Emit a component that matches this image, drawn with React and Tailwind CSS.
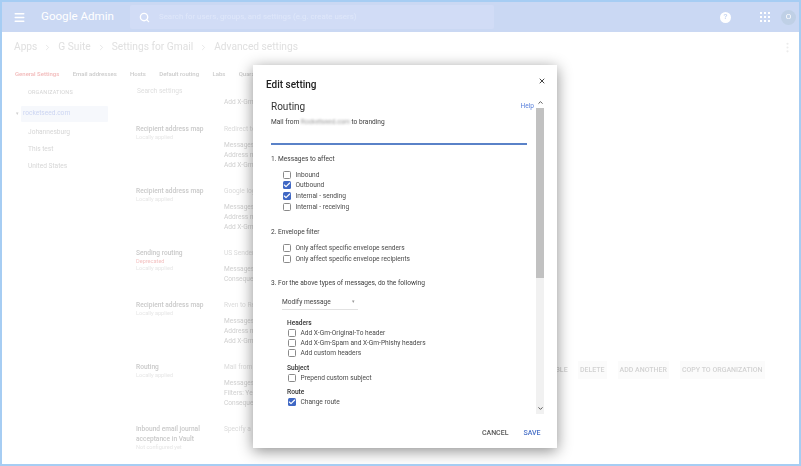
import React from "react";
import { Menu, Search, X, ChevronUp, ChevronDown, Check, EllipsisVertical, ChevronRight } from "lucide-react";

function Box({ on, className = "" }) {
  return (
    <span className={"flex h-[8px] w-[8px] shrink-0 items-center justify-center rounded-[1.5px] " + (on ? "bg-[#3f67c4] " : "border border-[#8a8a8a] bg-white ") + className}>
      {on && <Check size={8} strokeWidth={3.5} className="text-white" />}
    </span>
  );
}

function Opt({ label, on, deep }) {
  return (
    <div className={"flex items-center gap-[4.5px] " + (deep ? "h-[10px] pl-[17px]" : "h-[10.67px] pl-[12px]")}>
      <Box on={on} />
      <span className="text-[6.6px] leading-none text-[#4a4a4a]">{label}</span>
    </div>
  );
}

function Setting({ title, subs, lines, first, sub, actions, h = "h-[62px]" }) {
  return (
    <div className={"flex " + h}>
      <div className="w-[88px] shrink-0 pt-[1px]">
        {title.map((t) => (
          <div key={t} className="text-[6.6px] leading-[10px] font-medium text-[#c9c9c9]">{t}</div>
        ))}
        {sub && <div className="text-[5.6px] leading-[7px] text-[#f4c4c4]">{sub}</div>}
        {subs && <div className="text-[5.6px] leading-[7px] text-[#e6e6e6]">{subs}</div>}
      </div>
      <div className="w-[300px] shrink-0 pt-[1px] text-[6.6px] text-[#cfcfcf]">
        <div className="mb-[6px] leading-[10px] text-[#dadada]">{first}</div>
        {lines && lines.map((l) => <div key={l} className="leading-[10px]">{l}</div>)}
      </div>
      {actions && (
        <div className="ml-[16px] flex h-[18px] items-center gap-[11px] text-[7px] font-medium whitespace-nowrap text-[#d2d2d2]">
          <span className="w-[27px] text-right">DISABLE</span>
          <span className="bg-[#fbfbfb] px-[2px] py-[4px]">DELETE</span>
          <span className="bg-[#fbfbfb] px-[2px] py-[4px]">ADD ANOTHER</span>
          <span className="bg-[#fbfbfb] px-[2px] py-[4px]">COPY TO ORGANIZATION</span>
        </div>
      )}
    </div>
  );
}

export default function App() {
  return (
    <div className="relative box-border h-[466px] w-[801px] overflow-hidden border-2 border-[#a6cdf3] bg-white font-['Roboto',sans-serif]">
      <div className="blur-[0.6px]">
        <header className="flex h-[30px] items-center bg-[#cad8f3] text-white">
          <Menu size={13} strokeWidth={2.5} className="ml-[11px] shrink-0" />
          <div className="ml-[15px] w-[89px] shrink-0 text-[11.6px] leading-none whitespace-nowrap">Google Admin</div>
          <div className="flex h-[24px] w-[364px] shrink-0 items-center rounded-[2px] bg-[#d1dcf6]">
            <Search size={11} strokeWidth={3} className="ml-[9px] shrink-0" />
            <span className="ml-[9px] text-[7.9px] whitespace-nowrap text-[#dfe7fa]">Search for users, groups, and settings (e.g. create users)</span>
          </div>
          <div className="ml-auto flex h-[11px] w-[11px] items-center justify-center rounded-full bg-white text-[8px] font-bold text-[#cad8f3]">?</div>
          <div className="ml-[29px] grid h-[10px] w-[10px] grid-cols-3 gap-[1.5px]">
            {[0, 1, 2, 3, 4, 5, 6, 7, 8].map((i) => <span key={i} className="bg-white" />)}
          </div>
          <div className="mr-[3px] ml-[11px] flex h-[15px] w-[15px] items-center justify-center rounded-full bg-[#bfd0e6] text-[8px] text-white">O</div>
        </header>

        <div className="flex h-[30px] items-center pr-[5px] pl-[12px] text-[10.2px] whitespace-nowrap text-[#e0e0e0]">
          <span>Apps</span>
          <ChevronRight size={9} className="mx-[6px]" />
          <span>G Suite</span>
          <ChevronRight size={9} className="mx-[6px]" />
          <span>Settings for Gmail</span>
          <ChevronRight size={9} className="mx-[6px]" />
          <span>Advanced settings</span>
          <EllipsisVertical size={13} className="ml-auto text-[#ececec]" />
        </div>

        <nav className="flex h-[22px] items-center gap-[13.3px] pl-[13px] text-[6px] font-medium whitespace-nowrap text-[#cbcbcb]">
          <span className="text-[#f2b9b9]">General Settings</span>
          <span>Email addresses</span>
          <span>Hosts</span>
          <span>Default routing</span>
          <span>Labs</span>
          <span>Quarantines</span>
        </nav>

        <div className="mt-[2px] flex">
          <aside className="w-[134px] shrink-0">
            <div className="flex h-[12px] items-center pl-[26px] text-[5.5px] tracking-[0.2px] text-[#d4d4d4]">ORGANIZATIONS</div>
            <div className="mt-[8px] flex h-[16px] w-[106px] items-center pl-[14px] text-[6.6px] text-[#ccd5f2]">
              <span className="mr-[2px] text-[5px] text-[#d0d0d0]">▾</span>
              <span className="flex h-full w-[87px] items-center rounded-[1px] bg-[#f6f8fc] pl-[2px]">rocketseed.com</span>
            </div>
            <div className="mt-[2px] pl-[26px] text-[6.6px] text-[#d6d6d6]">
              <div className="flex h-[17px] items-center">Johannesburg</div>
              <div className="flex h-[17px] items-center">This test</div>
              <div className="flex h-[17px] items-center">United States</div>
            </div>
          </aside>
          <main className="min-w-0 flex-1">
            <div className="flex h-[12px] w-[300px] items-center pl-[1px] text-[6.6px] text-[#dedede]">Search settings</div>
            <div className="h-[9px] overflow-hidden pl-[88px] text-[6.6px] leading-[9px] text-[#d0d0d0]">Add X-Gm</div>
            <div className="mt-[16px]">
              <Setting title={["Recipient address map"]} subs="Locally applied" first="Redirect to" lines={["Messages", "Address map", "Add X-Gm"]} />
              <Setting title={["Recipient address map"]} subs="Locally applied" first="Google login" lines={["Messages", "Address map", "Add X-Gm"]} />
              <Setting title={["Sending routing"]} sub="Deprecated" subs="Locally applied" first="US Sender" lines={["Messages", "Consequence"]} h="h-[52px]" />
              <Setting title={["Recipient address map"]} subs="Locally applied" first="Rven to Rep" lines={["Messages", "Address map", "Add X-Gm"]} />
              <Setting title={["Routing"]} subs="Locally applied" first="Mail from" lines={["Messages", "Filters: Yes", "Consequence"]} actions />
              <Setting title={["Inbound email journal", "acceptance in Vault"]} subs="Not configured yet" first="Specify a" />
            </div>
          </main>
        </div>
      </div>

      <div className="absolute top-[63px] left-[251px] flex h-[383px] w-[304px] flex-col bg-white shadow-[0_3px_14px_rgba(0,0,0,0.45)]">
        <div className="relative h-[32px] shrink-0">
          <div className="pt-[13px] pl-[13px] text-[10px] leading-[13px] font-medium text-[#222] blur-[0.25px]">Edit setting</div>
          <X size={8} strokeWidth={3} className="absolute top-[12px] right-[11px] text-[#444]" />
        </div>
        <div className="flex h-[317px] shrink-0 pl-[13px]">
          <div className="w-[270px] shrink-0 overflow-hidden pl-[5px] text-[6.6px] text-[#3c3c3c] blur-[0.25px]">
            <div className="flex h-[17px] items-end justify-between pr-[2px]">
              <span className="text-[10px] leading-[14px] text-[#333]">Routing</span>
              <span className="pb-[4px] text-[6.6px] leading-none text-[#5b82dc]">Help</span>
            </div>
            <div className="mt-[3px] h-[10px] leading-[10px] whitespace-nowrap">
              Mail from <span className="text-[#999] blur-[1px]">Rocketseed.com</span> to branding
            </div>
            <div className="mt-[16px] h-[1.5px] w-[256px] bg-[#5a82c8]" />
            <div className="mt-[9px] h-[10px] leading-[10px]">1. Messages to affect</div>
            <div className="mt-[6px]">
              <Opt label="Inbound" />
              <Opt label="Outbound" on />
              <Opt label="Internal - sending" on />
              <Opt label="Internal - receiving" />
            </div>
            <div className="mt-[15px] h-[10px] leading-[10px]">2. Envelope filter</div>
            <div className="mt-[6px]">
              <Opt label="Only affect specific envelope senders" />
              <Opt label="Only affect specific envelope recipients" />
            </div>
            <div className="mt-[14px] h-[10px] leading-[10px]">3. For the above types of messages, do the following</div>
            <div className="mt-[6px] ml-[11px] flex h-[16px] w-[76px] items-center justify-between border-b border-[#e2e2e2] pr-[3px]">
              <span className="leading-none text-[#444]">Modify message</span>
              <span className="text-[5px] text-[#999]">▾</span>
            </div>
            <div className="mt-[8px] h-[10px] pl-[16px] leading-[10px] font-medium text-[#333]">Headers</div>
            <Opt deep label="Add X-Gm-Original-To header" />
            <Opt deep label="Add X-Gm-Spam and X-Gm-Phishy headers" />
            <Opt deep label="Add custom headers" />
            <div className="mt-[5px] h-[10px] pl-[16px] leading-[10px] font-medium text-[#333]">Subject</div>
            <Opt deep label="Prepend custom subject" />
            <div className="mt-[4px] h-[10px] pl-[16px] leading-[10px] font-medium text-[#333]">Route</div>
            <Opt deep label="Change route" on />
          </div>
          <div className="flex w-[8px] shrink-0 flex-col bg-[#f1f1f1]">
            <div className="flex h-[11px] items-center justify-center bg-white"><ChevronUp size={7} strokeWidth={3} className="text-[#444]" /></div>
            <div className="h-[170px] bg-[#c1c1c1]" />
            <div className="flex-1" />
            <div className="flex h-[11px] items-center justify-center"><ChevronDown size={7} strokeWidth={3} className="text-[#444]" /></div>
          </div>
        </div>
        <div className="flex flex-1 items-start justify-end gap-[15px] pt-[15px] pr-[16.5px] text-[7px] leading-[8px] font-medium blur-[0.25px]">
          <span className="text-[#555]">CANCEL</span>
          <span className="text-[#4a72c8]">SAVE</span>
        </div>
      </div>
    </div>
  );
}
